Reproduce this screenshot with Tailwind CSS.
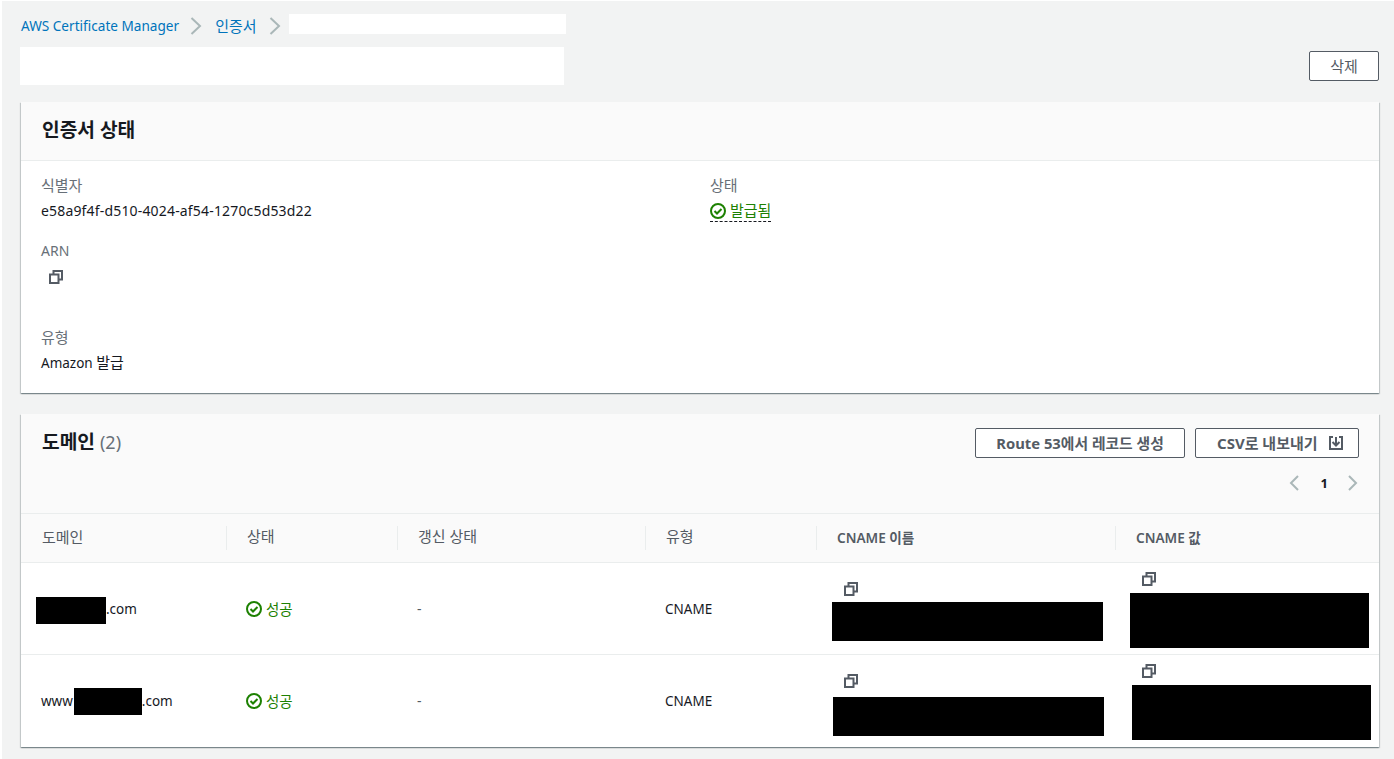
<!DOCTYPE html>
<html lang="ko">
<head>
    <meta charset="UTF-8">
    <meta name="viewport" content="width=device-width, initial-scale=1.0">
    <title>인증서 상태</title>
    <script src="https://cdn.jsdelivr.net/npm/@tailwindcss/browser@4"></script>
</head>
<body class="bg-white font-['Noto_Sans','Noto_Sans_CJK_KR',sans-serif] text-[14px] leading-[22px] text-[#16191f]">
    <div class="ml-[2px] mt-px h-[758px] overflow-hidden bg-[#f2f3f3] pl-[18px] pr-[15px]">

        <!-- breadcrumb -->
        <nav class="flex h-[20px] mt-[13px] items-center">
            <a class="ml-px mt-[4px] text-[#0073bb] text-[13.6px]">AWS Certificate Manager</a>
            <svg class="ml-[11px] mr-[13px] mt-[4px] w-[12px] h-[18px]" viewBox="0 0 12 18" fill="none" stroke="#aab7b8" stroke-width="2"><path d="M1.500 1l8.500 8-8.500 8"/></svg>
            <a class="mt-[3px] text-[#0073bb] text-[15px]">인증서</a>
            <svg class="ml-[12px] mr-[13px] mt-[4px] w-[12px] h-[18px]" viewBox="0 0 12 18" fill="none" stroke="#aab7b8" stroke-width="2"><path d="M1.500 1l8.500 8-8.500 8"/></svg>
            <div class="w-[277px] h-[20px] bg-white -ml-[5px]"></div>
        </nav>

        <!-- title row -->
        <div class="flex justify-between mt-[13px] h-[38px]">
            <div class="w-[544px] h-[38px] bg-white"></div>
            <button class="mt-[4px] w-[70px] h-[30px] border border-[#545b64] rounded-[2px] bg-white text-[#545b64] text-[15px]">삭제</button>
        </div>

        <!-- certificate status -->
        <section class="mt-[17px] ml-px bg-white shadow-[0_1px_1px_0_rgba(0,28,36,0.3),1px_1px_1px_0_rgba(0,28,36,0.15),-1px_1px_1px_0_rgba(0,28,36,0.15)] h-[291px]">
            <div class="h-[59px] bg-[#fafafa] border-b border-[#eaeded] pl-[21px] pr-[20px] pb-[3px] flex items-center">
                <h2 class="text-[19.2px] font-bold leading-[22px]">인증서 상태</h2>
            </div>
            <div class="grid grid-cols-2 px-[20px] pt-[13px]">
                <div>
                    <div class="text-[#687078] text-[15px]">식별자</div>
                    <div class="mt-[4px] tracking-[0.17px]">e58a9f4f-d510-4024-af54-1270c5d53d22</div>
                    <div class="mt-[18px] text-[#687078]">ARN</div>
                    <svg class="mt-[8px] ml-[8px] w-[14px] h-[14px]" viewBox="0 0 14 14" fill="none" stroke="#545b64" stroke-width="2"><path d="M1 4.500h8.500v8.500h-8.500z"/><path d="M4.500 4V1H13v8.500h-3"/></svg>
                    <div class="mt-[42px] text-[#687078] text-[15px]">유형</div>
                    <div class="mt-[3px] text-[13.5px]">Amazon <span class="text-[15px]">발급</span></div>
                </div>
                <div class="pl-[10px]">
                    <div class="text-[#687078] text-[15px]">상태</div>
                    <div class="mt-[4px] inline-flex items-center gap-[4px] border-b border-dashed border-[#16191f] h-[22px] text-[#1d8102] text-[15px]">
                        <svg class="w-[16px] h-[16px]" viewBox="0 0 16 16" fill="none" stroke="#1d8102" stroke-width="2"><circle cx="8" cy="8" r="7"/><path d="M4.500 8l2.500 2.500 4.500-4.500"/></svg>
                        <span class="-mt-[2px]">발급됨</span>
                    </div>
                </div>
            </div>
        </section>

        <!-- domains -->
        <section class="mt-[21px] ml-px bg-white shadow-[0_1px_1px_0_rgba(0,28,36,0.3),1px_1px_1px_0_rgba(0,28,36,0.15),-1px_1px_1px_0_rgba(0,28,36,0.15)] h-[333px]">
            <div class="h-[100px] bg-[#fafafa] border-b border-[#eaeded] pl-[21px] pr-[20px] pt-[14px] flex justify-between">
                <h2 class="text-[19.2px] font-bold leading-[28px]">도메인 <span class="font-normal text-[#687078] text-[18px]">(2)</span></h2>
                <div class="flex flex-col items-end">
                    <div class="flex gap-[10px]">
                        <button class="w-[210px] h-[30px] border border-[#545b64] rounded-[2px] bg-white text-[#545b64] font-bold text-[14.8px]">Route 53에서 레코드 생성</button>
                        <button class="w-[164px] h-[30px] border border-[#545b64] rounded-[2px] bg-white text-[#545b64] font-bold text-[15px] flex items-center pl-[21px] gap-[11px]">
                            CSV로 내보내기
                            <svg class="w-[14px] h-[14px]" viewBox="0 0 14 14" fill="none" stroke="#545b64" stroke-width="2"><path d="M4 1H1v12h12V1h-3"/><path d="M7 1v7"/><path d="M3.500 6L7 9.500 10.500 6"/></svg>
                        </button>
                    </div>
                    <div class="flex items-center mt-[14px] h-[22px]">
                        <svg class="w-[12px] h-[16px]" viewBox="0 0 12 16" fill="none" stroke="#aab7b8" stroke-width="2"><path d="M10 1L3 8l7 7"/></svg>
                        <span class="ml-[21px] mr-[19px] font-bold text-[13px]">1</span>
                        <svg class="w-[12px] h-[16px]" viewBox="0 0 12 16" fill="none" stroke="#aab7b8" stroke-width="2"><path d="M2 1l7 7-7 7"/></svg>
                    </div>
                </div>
            </div>

            <div class="grid grid-cols-[205px_171px_248px_171px_299px_264px]">
                <!-- header row -->
                <div class="h-[49px] bg-[#fafafa] border-b border-[#eaeded] pl-[21px] pb-[2px] flex items-center text-[#545b64] text-[15px]">도메인</div>
                <div class="h-[49px] bg-[#fafafa] border-b border-[#eaeded] flex items-center text-[#545b64] text-[15px]"><span class="h-[24px] leading-[20px] border-l border-[#eaeded] pl-[20px]">상태</span></div>
                <div class="h-[49px] bg-[#fafafa] border-b border-[#eaeded] flex items-center text-[#545b64] text-[15px]"><span class="h-[24px] leading-[20px] border-l border-[#eaeded] pl-[20px]">갱신 상태</span></div>
                <div class="h-[49px] bg-[#fafafa] border-b border-[#eaeded] flex items-center text-[#545b64] text-[15px]"><span class="h-[24px] leading-[20px] border-l border-[#eaeded] pl-[20px]">유형</span></div>
                <div class="h-[49px] bg-[#fafafa] border-b border-[#eaeded] flex items-center text-[#545b64] font-semibold text-[13.6px]"><span class="h-[24px] leading-[24px] border-l border-[#eaeded] pl-[20px]">CNAME 이름</span></div>
                <div class="h-[49px] bg-[#fafafa] border-b border-[#eaeded] flex items-center text-[#545b64] font-semibold text-[13.6px]"><span class="h-[24px] leading-[24px] border-l border-[#eaeded] pl-[20px]">CNAME 값</span></div>

                <!-- row 1 -->
                <div class="h-[92px] border-b border-[#eaeded] pl-[15px] flex items-center text-[13.5px]"><span class="w-[70px] h-[27px] mt-[4px] bg-black"></span>.com</div>
                <div class="h-[92px] border-b border-[#eaeded] pl-[20px] flex items-center gap-[4px] text-[#1d8102] text-[14.5px]">
                    <svg class="w-[16px] h-[16px]" viewBox="0 0 16 16" fill="none" stroke="#1d8102" stroke-width="2"><circle cx="8" cy="8" r="7"/><path d="M4.500 8l2.500 2.500 4.500-4.500"/></svg>
                    성공
                </div>
                <div class="h-[92px] border-b border-[#eaeded] pl-[20px] flex items-center text-[#545b64]">-</div>
                <div class="h-[92px] border-b border-[#eaeded] pl-[20px] flex items-center text-[13.5px]">CNAME</div>
                <div class="h-[92px] border-b border-[#eaeded] pl-[16px] pt-[19px]">
                    <svg class="ml-[12px] w-[14px] h-[14px]" viewBox="0 0 14 14" fill="none" stroke="#545b64" stroke-width="2"><path d="M1 4.500h8.500v8.500h-8.500z"/><path d="M4.500 4V1H13v8.500h-3"/></svg>
                    <div class="mt-[6px] w-[271px] h-[39px] bg-black"></div>
                </div>
                <div class="h-[92px] border-b border-[#eaeded] pl-[15px] pt-[9px]">
                    <svg class="ml-[12px] w-[14px] h-[14px]" viewBox="0 0 14 14" fill="none" stroke="#545b64" stroke-width="2"><path d="M1 4.500h8.500v8.500h-8.500z"/><path d="M4.500 4V1H13v8.500h-3"/></svg>
                    <div class="mt-[7px] w-[239px] h-[55px] bg-black"></div>
                </div>

                <!-- row 2 -->
                <div class="h-[91px] pl-[20px] flex items-center text-[13.5px]">www<span class="w-[68px] h-[27px] mt-[2px] ml-px bg-black"></span>.com</div>
                <div class="h-[91px] pl-[20px] flex items-center gap-[4px] text-[#1d8102] text-[14.5px]">
                    <svg class="w-[16px] h-[16px]" viewBox="0 0 16 16" fill="none" stroke="#1d8102" stroke-width="2"><circle cx="8" cy="8" r="7"/><path d="M4.500 8l2.500 2.500 4.500-4.500"/></svg>
                    성공
                </div>
                <div class="h-[91px] pl-[20px] flex items-center text-[#545b64]">-</div>
                <div class="h-[91px] pl-[20px] flex items-center text-[13.5px]">CNAME</div>
                <div class="h-[91px] pl-[17px] pt-[19px]">
                    <svg class="ml-[11px] w-[14px] h-[14px]" viewBox="0 0 14 14" fill="none" stroke="#545b64" stroke-width="2"><path d="M1 4.500h8.500v8.500h-8.500z"/><path d="M4.500 4V1H13v8.500h-3"/></svg>
                    <div class="mt-[9px] w-[271px] h-[39px] bg-black"></div>
                </div>
                <div class="h-[91px] pl-[17px] pt-[9px]">
                    <svg class="ml-[10px] w-[14px] h-[14px]" viewBox="0 0 14 14" fill="none" stroke="#545b64" stroke-width="2"><path d="M1 4.500h8.500v8.500h-8.500z"/><path d="M4.500 4V1H13v8.500h-3"/></svg>
                    <div class="mt-[7px] w-[239px] h-[55px] bg-black"></div>
                </div>
            </div>
        </section>
    </div>
</body>
</html>
